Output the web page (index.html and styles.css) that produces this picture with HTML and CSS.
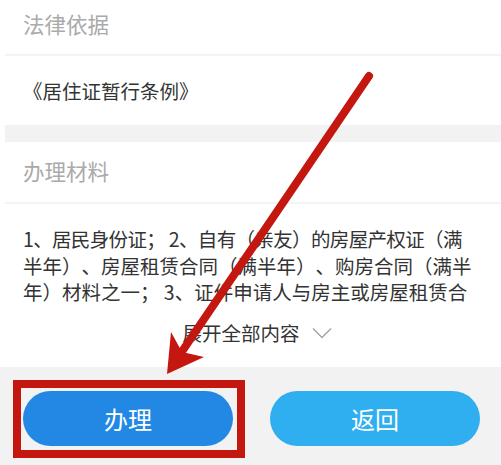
FILE: index.html
```html
<!DOCTYPE html>
<html lang="zh-CN">
<head>
<meta charset="utf-8">
<title>办理材料</title>
<link rel="stylesheet" href="styles.css">
</head>
<body>
<div class="page">
  <section class="block">
    <div class="block-title">法律依据</div>
    <div class="block-body law">《居住证暂行条例》</div>
  </section>
  <div class="gap"></div>
  <section class="block">
    <div class="block-title title-2">办理材料</div>
    <div class="block-body materials">
      <p class="materials-text"><span class="tight">1、居民身份证； 2、自有（亲友）的房屋产权证（满</span><br>半年）、房屋租赁合同（满半年）、购房合同（满半<br>年）材料之一； 3、证件申请人与房主或房屋租赁合</p>
      <div class="expand">展开全部内容<svg class="chevron" width="20" height="12" viewBox="0 0 20 12"><path d="M1 1.5 L10 10.5 L19 1.5" fill="none" stroke="#a3a3a3" stroke-width="1.4"/></svg></div>
    </div>
  </section>
  <footer class="actions">
    <button class="btn btn-primary">办理</button>
    <button class="btn btn-secondary">返回</button>
  </footer>
  <div class="highlight"></div>
  <svg class="arrow" width="501" height="465" viewBox="0 0 501 465">
    <line x1="369" y1="76" x2="183" y2="350" stroke="#c3170f" stroke-width="8" stroke-linecap="round"/>
    <polygon points="167,374 171,332 182,352 204,357" fill="#c3170f"/>
  </svg>
</div>
</body>
</html>
```

FILE: styles.css
```css
* { box-sizing: border-box; }
html, body { margin: 0; padding: 0; background: #ffffff; }
body {
  font-family: "Noto Sans CJK SC", "Noto Sans", sans-serif;
  width: 501px;
  height: 465px;
  overflow: hidden;
  text-spacing-trim: space-all;
}
.page {
  position: relative;
  width: 501px;
  height: 465px;
  padding-left: 5px;
  display: flex;
  flex-direction: column;
}
.block { background: #fff; }
.block-title {
  height: 56px;
  line-height: 48px;
  padding-left: 18px;
  font-size: 21.5px;
  color: #aaaaaa;
  border-bottom: 2px solid #f4f4f4;
}
.title-2 {
  height: 62px;
  line-height: 58px;
}
.block-body {
  padding: 0 18px;
  color: #333333;
}
.law {
  height: 69px;
  padding-top: 20px;
  line-height: 30px;
  font-size: 19.5px;
}
.gap {
  height: 17px;
  background: #f2f2f2;
}
.materials {
  padding-top: 22px;
  padding-bottom: 21px;
  font-size: 19.5px;
}
.materials-text {
  margin: 0;
  line-height: 26.5px;
  white-space: nowrap;
}
.tight { letter-spacing: -0.65px; }
.expand {
  margin-top: 14px;
  line-height: 26.5px;
  display: flex;
  justify-content: center;
  align-items: center;
  gap: 12px;
  padding-left: 8px;
}
.chevron { display: block; }
.actions {
  flex: 1;
  margin-left: -5px;
  background: #f2f2f2;
  display: flex;
  gap: 37px;
  padding: 24px 21px 0 23px;
  align-items: flex-start;
}
.btn {
  width: 210px;
  height: 55px;
  border: none;
  border-radius: 28px;
  color: #ffffff;
  font-family: "Noto Sans CJK SC", "Noto Sans", sans-serif;
  font-size: 24px;
  padding: 0;
}
.btn-primary { background: #2288e4; }
.btn-secondary { background: #30aff0; }
.highlight {
  position: absolute;
  left: 13px;
  top: 380px;
  width: 232px;
  height: 78px;
  border: 8px solid #c3170f;
}
.arrow {
  position: absolute;
  left: 0;
  top: 0;
  pointer-events: none;
}
```
